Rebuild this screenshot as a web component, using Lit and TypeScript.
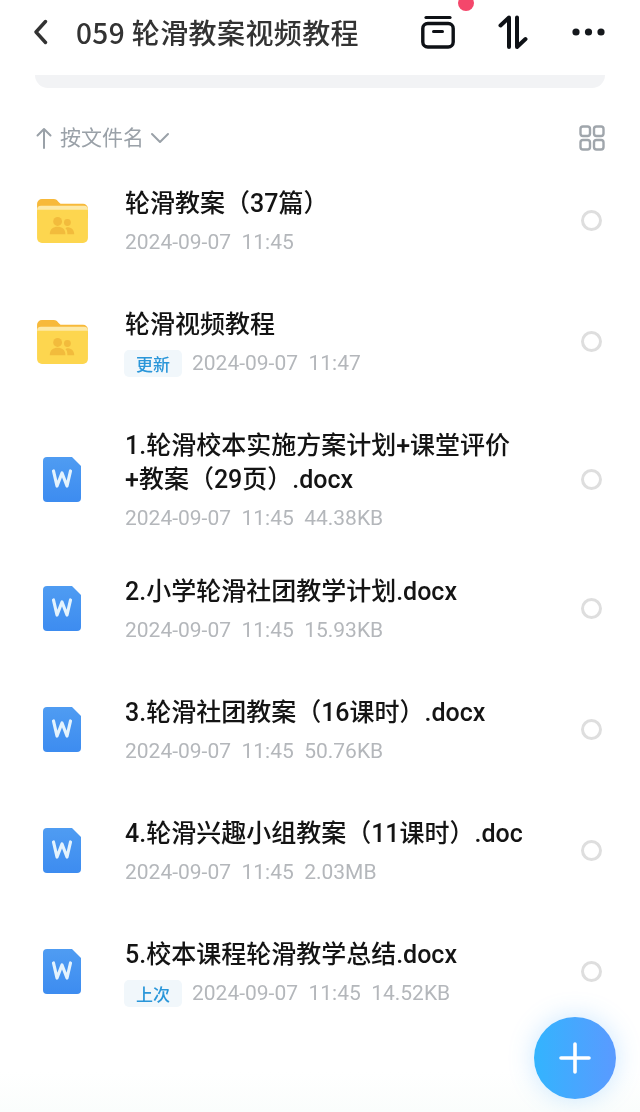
import { LitElement, html, css, svg } from "lit";
import { customElement } from "lit/decorators.js";

interface Item {
  kind: "folder" | "word";
  title: string[];
  tag?: string;
  meta: string;
}

const items: Item[] = [
  { kind: "folder", title: ["轮滑教案（37篇）"], meta: "2024-09-07  11:45" },
  { kind: "folder", title: ["轮滑视频教程"], tag: "更新", meta: "2024-09-07  11:47" },
  { kind: "word", title: ["1.轮滑校本实施方案计划+课堂评价", "+教案（29页）.docx"], meta: "2024-09-07  11:45  44.38KB" },
  { kind: "word", title: ["2.小学轮滑社团教学计划.docx"], meta: "2024-09-07  11:45  15.93KB" },
  { kind: "word", title: ["3.轮滑社团教案（16课时）.docx"], meta: "2024-09-07  11:45  50.76KB" },
  { kind: "word", title: ["4.轮滑兴趣小组教案（11课时）.doc"], meta: "2024-09-07  11:45  2.03MB" },
  { kind: "word", title: ["5.校本课程轮滑教学总结.docx"], tag: "上次", meta: "2024-09-07  11:45  14.52KB" },
];

const folderIcon = svg`<svg width="51" height="45" viewBox="0 0 52 46">
  <path d="M0 6a5 5 0 0 1 5-5h12c2.500 0 3.500 1 5 3l2 2h23a5 5 0 0 1 5 5v10H0z" fill="#f7b93a"/>
  <path d="M0 12a4 4 0 0 1 4-4h44a4 4 0 0 1 4 4v2H0z" fill="#fde9a6"/>
  <path d="M0 12h52v29a5 5 0 0 1-5 5H5a5 5 0 0 1-5-5z" fill="#fdd64f"/>
  <circle cx="21" cy="24" r="4.500" fill="#f2bb3c"/>
  <circle cx="31" cy="25" r="3.500" fill="#f2bb3c"/>
  <path d="M13 37c0-5 3.500-7.500 8-7.500s8 2.500 8 7.500z" fill="#f2bb3c"/>
  <path d="M31 30c4 0 7 2.500 7 7h-7c0-3-.5-5-2-6.200.6-.5 1.200-.8 2-.8z" fill="#f2bb3c"/>
</svg>`;

const wordIcon = svg`<svg width="38" height="45" viewBox="0 0 38 45">
  <defs><linearGradient id="w" x1="0" y1="0" x2="0" y2="1"><stop offset="0" stop-color="#4f9cf2"/><stop offset="1" stop-color="#3d8cf0"/></linearGradient></defs>
  <path d="M4 0h25l9 9v32a4 4 0 0 1-4 4H4a4 4 0 0 1-4-4V4a4 4 0 0 1 4-4z" fill="url(#w)"/>
  <path d="M10.500 14l3.500 15 5-13 5 13 3.500-15" fill="none" stroke="#e4f3fd" stroke-width="3.200" stroke-linecap="round" stroke-linejoin="round"/>
</svg>`;

@customElement("app-root")
export class AppRoot extends LitElement {
  static styles = css`
    :host {
      display: block;
      position: relative;
      height: 1112px;
      overflow: hidden;
      background: #fff;
      font-family: "Noto Sans CJK SC", "Noto Sans", sans-serif;
      color: #111;
    }
    .page { filter: blur(0.45px); }
    .header {
      display: flex;
      align-items: center;
      height: 64px;
      padding: 0 35px 0 33px;
      box-sizing: border-box;
    }
    .back { display: block; margin-right: 28px; }
    .head-title {
      flex: 1;
      font-size: 28px;
      font-weight: 500;
      letter-spacing: 0.4px;
      color: #333;
      white-space: nowrap;
    }
    .head-icons { display: flex; align-items: center; }
    .archive-wrap { position: relative; display: flex; margin-right: 43px; }
    .dot {
      position: absolute;
      left: 37px;
      top: -20px;
      width: 16px;
      height: 16px;
      border-radius: 50%;
      background: #f4476b;
    }
    .sort-icon { display: block; margin-right: 44px; }
    .panel {
      height: 13px;
      margin: 11px 35px 0;
      background: #f2f3f5;
      border-radius: 0 0 20px 20px;
    }
    .sortbar {
      display: flex;
      align-items: center;
      height: 44px;
      padding: 27.500px 35px 0 36px;
      color: #9aa1a8;
      font-size: 21px;
    }
    .sortbar .label { margin: -3px 0 0 8px; }
    .sortbar .caret { margin-left: 6px; }
    .sortbar .grid { margin-left: auto; }
    .row {
      display: flex;
      align-items: center;
      min-height: 121px;
      box-sizing: border-box;
      padding-right: 38px;
    }
    .row.double { min-height: 146px; padding-top: 9px; }
    .ico {
      flex: none;
      width: 125px;
      display: flex;
      padding-left: 37px;
      box-sizing: border-box;
    }
    .ico.word { padding-left: 43px; }
    .body { flex: 1; padding-top: 10px; }
    .title {
      font-family: "Roboto", "Noto Sans CJK SC", sans-serif;
      font-size: 25px;
      line-height: 34px;
      font-weight: 500;
      color: #141414;
      white-space: nowrap;
    }
    .meta {
      display: flex;
      align-items: center;
      height: 42px;
      font-family: "Roboto", "Noto Sans", sans-serif;
      font-size: 21px;
      color: #b4b7bb;
      white-space: pre;
    }
    .tag {
      font-family: "Noto Sans CJK SC", sans-serif;
      width: 58px;
      height: 27px;
      line-height: 27px;
      margin-right: 10px;
      margin-left: -1px;
      text-align: center;
      border-radius: 5px;
      background: #f1f7fb;
      color: #2a96d9;
      font-size: 17px;
      font-weight: 500;
    }
    .radio {
      flex: none;
      width: 21px;
      height: 21px;
      box-sizing: border-box;
      border: 3px solid #dedede;
      border-radius: 50%;
    }
    .fab {
      position: absolute;
      left: 534px;
      top: 1017px;
      width: 82px;
      height: 82px;
      border-radius: 50%;
      background: linear-gradient(90deg, #33b4fe, #5a9aff);
      box-shadow: 0 0 26px rgba(70, 170, 255, 0.28);
      display: flex;
      align-items: center;
      justify-content: center;
    }
    .fade {
      position: absolute;
      left: 0;
      right: 0;
      bottom: 0;
      height: 40px;
      background: linear-gradient(180deg, rgba(250, 253, 252, 0), #fafdfc);
    }
  `;

  render() {
    return html`
      <div class="page">
      <div class="header">
        <svg class="back" width="15" height="26" viewBox="0 0 15 26">
          <path d="M12.500 2.500L3 13l9.500 10.500" fill="none" stroke="#333" stroke-width="3.400" stroke-linecap="round" stroke-linejoin="round"/>
        </svg>
        <div class="head-title">059 轮滑教案视频教程</div>
        <div class="head-icons">
          <div class="archive-wrap">
            <svg width="34" height="34" viewBox="0 0 34 34">
              <path d="M5 2.500h24" stroke="#0e1116" stroke-width="3.200" stroke-linecap="round"/>
              <rect x="1.800" y="8.500" width="30.400" height="23.500" rx="5" fill="none" stroke="#0e1116" stroke-width="3.400"/>
              <path d="M12.500 16.500h9" stroke="#0e1116" stroke-width="3" stroke-linecap="round"/>
            </svg>
            <span class="dot"></span>
          </div>
          <svg class="sort-icon" width="30" height="34" viewBox="0 0 30 34">
            <path d="M11 32V2.500L2.500 10.500" fill="none" stroke="#0e1116" stroke-width="4" stroke-linecap="round" stroke-linejoin="round"/>
            <path d="M19 2.500V32L27.500 24" fill="none" stroke="#0e1116" stroke-width="4" stroke-linecap="round" stroke-linejoin="round"/>
          </svg>
          <svg width="33" height="8" viewBox="0 0 33 8">
            <circle cx="4" cy="4" r="3.600" fill="#15181c"/>
            <circle cx="16.500" cy="4" r="3.600" fill="#15181c"/>
            <circle cx="29" cy="4" r="3.600" fill="#15181c"/>
          </svg>
        </div>
      </div>
      <div class="panel"></div>
      <div class="sortbar">
        <svg width="16" height="22" viewBox="0 0 16 22">
          <path d="M8 21V2M1.500 8.500L8 2l6.500 6.500" fill="none" stroke="#9aa1a8" stroke-width="2" stroke-linecap="round" stroke-linejoin="round"/>
        </svg>
        <span class="label">按文件名</span>
        <svg class="caret" width="20" height="12" viewBox="0 0 20 12">
          <path d="M2 2l8 8 8-8" fill="none" stroke="#9aa1a8" stroke-width="2" stroke-linecap="round" stroke-linejoin="round"/>
        </svg>
        <svg class="grid" width="26" height="26" viewBox="0 0 26 26">
          <g fill="none" stroke="#a0a6ac" stroke-width="2.400">
            <rect x="1.500" y="1.500" width="9.500" height="9.500" rx="2.500"/>
            <rect x="15" y="1.500" width="9.500" height="9.500" rx="2.500"/>
            <rect x="1.500" y="15" width="9.500" height="9.500" rx="2.500"/>
            <rect x="15" y="15" width="9.500" height="9.500" rx="2.500"/>
          </g>
        </svg>
      </div>
      <div class="list">
        ${items.map(
          (it) => html`
            <div class="row ${it.title.length > 1 ? "double" : ""}">
              <div class="ico ${it.kind}">${it.kind === "folder" ? folderIcon : wordIcon}</div>
              <div class="body">
                ${it.title.map((t) => html`<div class="title">${t}</div>`)}
                <div class="meta">${it.tag ? html`<span class="tag">${it.tag}</span>` : ""}${it.meta}</div>
              </div>
              <div class="radio"></div>
            </div>
          `
        )}
      </div>
      </div>
      <div class="fade"></div>
      <div class="fab">
        <svg width="32" height="32" viewBox="0 0 32 32">
          <path d="M16 2v28M2 16h28" stroke="#fff" stroke-width="3.600" stroke-linecap="round"/>
        </svg>
      </div>
    `;
  }
}
